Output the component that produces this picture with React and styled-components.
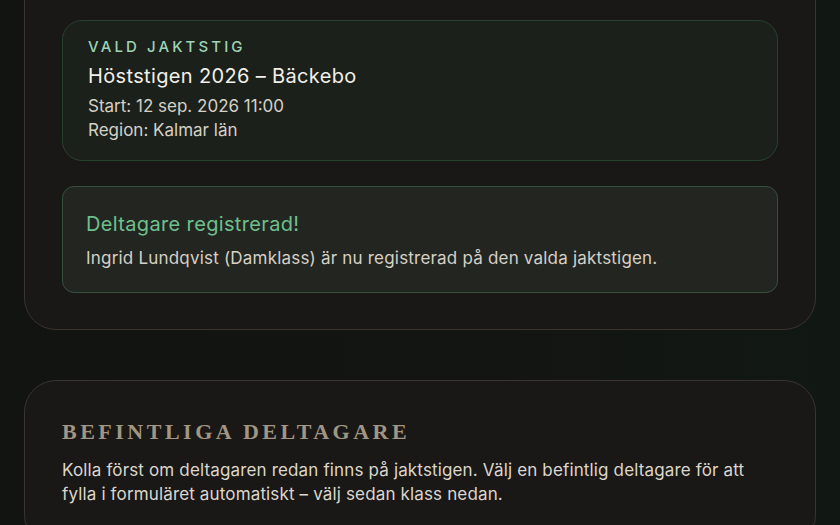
import React from "react";
import styled, { createGlobalStyle } from "styled-components";

const Global = createGlobalStyle`
  html, body { margin: 0; padding: 0; background: #121412; }
  body { font-family: Inter, "Noto Sans", sans-serif; color: #dcd6cc; overflow: hidden; }
  * { box-sizing: border-box; }
`;

const Page = styled.div`
  width: 840px;
  height: 525px;
  overflow: hidden;
  padding: 0 24px;
  background: linear-gradient(90deg, #121412 0%, #131512 60%, #111814 100%);
  display: flex;
  flex-direction: column;
  gap: 50px;
`;

const Panel = styled.section`
  background: #1a1816;
  border: 1px solid #3a332e;
  border-radius: 32px;
  padding: ${(p) => p.$pad};
  margin-top: ${(p) => p.$mt || "0"};
  display: flex;
  flex-direction: column;
  gap: ${(p) => p.$gap || "0"};
`;

const Card = styled.div`
  border: 1px solid ${(p) => p.$border};
  background: ${(p) => p.$bg};
  border-radius: ${(p) => p.$radius};
  padding: ${(p) => p.$pad};
  display: flex;
  flex-direction: column;
`;

const Label = styled.div`
  font-size: 15px;
  line-height: 22px;
  font-weight: 500;
  letter-spacing: 3.1px;
  text-transform: uppercase;
  color: #9fd3b6;
`;

const Title = styled.div`
  font-size: 20px;
  line-height: 28px;
  letter-spacing: 0.35px;
  margin-top: ${(p) => p.$mt || "0"};
  color: ${(p) => p.$color || "#f2efe8"};
`;

const Line = styled.div`
  font-size: 17px;
  line-height: 24px;
  letter-spacing: ${(p) => p.$ls || "0"};
  margin-top: ${(p) => p.$mt || "0"};
  color: ${(p) => p.$color || "#d6d0c6"};
`;

const Heading = styled.h2`
  margin: 0;
  font-family: "Liberation Serif", "DejaVu Serif", serif;
  font-weight: 700;
  font-size: 22px;
  line-height: 28px;
  letter-spacing: 3.5px;
  text-transform: uppercase;
  color: #a19684;
`;

const Para = styled.p`
  margin: 12px 0 0;
  font-size: 17px;
  line-height: 24px;
  letter-spacing: 0.15px;
  color: #dcd6cc;
  max-width: 700px;
`;

export default function App() {
  return (
    <>
      <Global />
      <Page>
        <Panel $mt="-40px" $pad="59px 37px 36px" $gap="25px">
          <Card $border="#26422f" $bg="#1b201b" $radius="20px" $pad="15px 25px 18px">
            <Label>Vald jaktstig</Label>
            <Title $mt="4px">Höststigen 2026 – Bäckebo</Title>
            <Line $mt="4px">Start: 12 sep. 2026 11:00</Line>
            <Line>Region: Kalmar län</Line>
          </Card>
          <Card $border="#34503d" $bg="#232521" $radius="12px" $pad="23px 23px 22px">
            <Title $color="#6ec08c">Deltagare registrerad!</Title>
            <Line $mt="8px" $ls="0.2px">Ingrid Lundqvist (Damklass) är nu registrerad på den valda jaktstigen.</Line>
          </Card>
        </Panel>
        <Panel $pad="37px 37px 40px">
          <Heading>Befintliga deltagare</Heading>
          <Para>
            Kolla först om deltagaren redan finns på jaktstigen. Välj en befintlig deltagare för att
            fylla i formuläret automatiskt – välj sedan klass nedan.
          </Para>
        </Panel>
      </Page>
    </>
  );
}
